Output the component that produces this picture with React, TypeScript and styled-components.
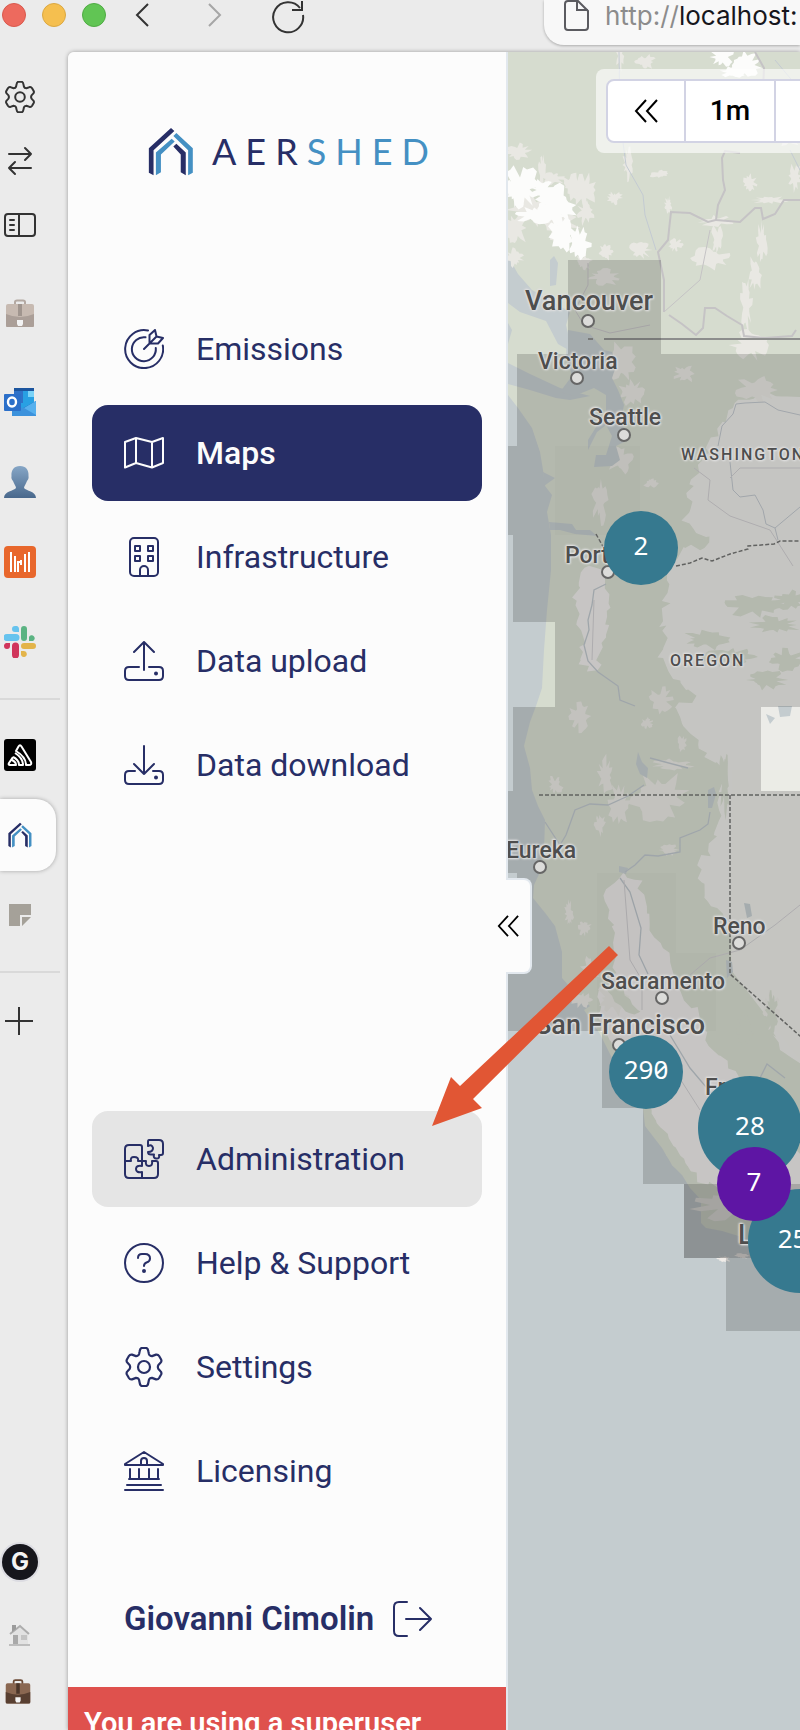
import React from "react";
import styled, { createGlobalStyle } from "styled-components";

const navy = "#272e66";
const sky = "#4490c3";

const Global = createGlobalStyle`
  * { box-sizing: border-box; }
  body { margin: 0; background: #ebebeb; font-family: Roboto, "Liberation Sans", sans-serif; }
  button { font: inherit; color: inherit; background: none; border: 0; padding: 0; cursor: pointer; }
  a { color: inherit; text-decoration: none; }
  svg { display: block; flex: none; }
`;

const Browser = styled.div`
  display: flex;
  flex-direction: column;
  height: 100vh;
  overflow: hidden;
`;

const TopBar = styled.header`
  display: flex;
  align-items: flex-start;
  flex: none;
  height: 52px;
  padding-left: 2px;
`;

const TopTools = styled.div`
  display: flex;
  align-items: center;
  height: 30px;
`;

const Lights = styled.div`
  display: flex;
  gap: 16px;
  margin-right: 20px;
`;

const Light = styled.button<{ $fill: string; $edge: string }>`
  width: 24px;
  height: 24px;
  border-radius: 50%;
  background: ${(p) => p.$fill};
  border: 1px solid ${(p) => p.$edge};
`;

const ToolButton = styled.button<{ $after?: number }>`
  display: grid;
  place-items: center;
  width: 32px;
  height: 30px;
  margin-right: ${(p) => p.$after ?? 0}px;
`;

const UrlBar = styled.label`
  display: flex;
  flex: 1;
  align-items: flex-start;
  height: 45px;
  min-width: 0;
  margin-left: 241px;
  padding-left: 20px;
  background: #f8f8f8;
  border-radius: 0 0 0 20px;
  box-shadow: 0 1px 3px rgba(0, 0, 0, 0.28);
  font: 26px/32px Inter, sans-serif;
  color: #8c8c8c;
  overflow: hidden;
  svg { margin-right: 16px; }
`;

const UrlInput = styled.input`
  flex: 1;
  min-width: 0;
  height: 32px;
  padding: 0;
  border: 0;
  background: none;
  outline: none;
  font: inherit;
  color: #16161c;
`;

const Body = styled.div`
  display: flex;
  flex: 1;
  min-height: 0;
`;

const Rail = styled.nav`
  display: flex;
  flex-direction: column;
  flex: none;
  width: 68px;
  padding: 13px 0 10px;
  color: #333;
`;

const RailButton = styled.button<{ $h: number; $gap?: number }>`
  display: flex;
  align-items: center;
  flex: none;
  height: ${(p) => p.$h}px;
  margin-bottom: ${(p) => p.$gap ?? 0}px;
  padding-left: 4px;
`;

const ActiveTab = styled.button`
  display: flex;
  align-items: center;
  flex: none;
  width: 56px;
  height: 72px;
  margin: 4px 0;
  padding-left: 8px;
  background: #fcfcfc;
  border-radius: 0 20px 20px 0;
  box-shadow: 0 0 4px rgba(0, 0, 0, 0.3);
`;

const RailLine = styled.hr`
  width: 60px;
  height: 2px;
  flex: none;
  margin: 16px 0 15px;
  border: 0;
  background: #d9d9d9;
`;

const RailSpace = styled.div`
  flex: 1;
`;

const Avatar = styled.span`
  display: grid;
  place-items: center;
  width: 36px;
  height: 36px;
  margin-left: -2px;
  border-radius: 50%;
  background: #16161c;
  box-shadow: 0 0 0 2px #dcdce2;
  color: #f4f4f4;
  font: 700 24px/36px Inter, sans-serif;
`;

const Frame = styled.main`
  display: flex;
  flex: 1;
  min-width: 0;
  border-top-left-radius: 6px;
  box-shadow: 0 0 4px rgba(0, 0, 0, 0.35);
  overflow: hidden;
`;

const Sidebar = styled.aside`
  position: relative;
  z-index: 2;
  display: flex;
  flex-direction: column;
  flex: none;
  width: 440px;
  background: #fcfcfc;
  border-right: 2px solid #e2e8ee;
  color: ${navy};
  > * { flex-shrink: 0; }
`;

const Brand = styled.a`
  display: flex;
  align-items: center;
  height: 50px;
  margin: 74px 0 125px 80px;
  gap: 18px;
  font: 36px/50px Lato, sans-serif;
  letter-spacing: 9px;
  span span { color: ${sky}; }
`;

const NavList = styled.nav<{ $after: number }>`
  display: flex;
  flex-direction: column;
  gap: 8px;
  margin: 0 24px ${(p) => p.$after}px;
`;

const NavItem = styled.a<{ $tone?: "active" | "hover" }>`
  display: flex;
  align-items: center;
  gap: 32px;
  height: 96px;
  padding: 0 32px;
  border-radius: 16px;
  font-size: 32px;
  line-height: 40px;
  font-weight: ${(p) => (p.$tone === "active" ? 500 : 400)};
  color: ${(p) => (p.$tone === "active" ? "#fcfcfc" : navy)};
  background: ${(p) => (p.$tone === "active" ? navy : p.$tone === "hover" ? "#e5e5e5" : "none")};
`;

const UserRow = styled.div`
  display: flex;
  align-items: center;
  gap: 18px;
  height: 96px;
  margin: 0 24px 20px;
  padding: 0 32px;
  font-size: 33px;
  line-height: 40px;
  font-weight: 600;
`;

const Banner = styled.p`
  flex: 1;
  margin: 0;
  padding: 20px 16px;
  background: #df514d;
  color: #fff;
  font-size: 29px;
  line-height: 32px;
  font-weight: 600;
`;

const Collapse = styled.button`
  position: absolute;
  top: 826px;
  right: -26px;
  display: flex;
  align-items: center;
  width: 26px;
  height: 96px;
  background: #fcfcfc;
  border: 2px solid #e2e8ee;
  border-left: 0;
  border-radius: 0 8px 8px 0;
  color: #000;
  svg { margin-left: -9px; }
`;

const MapArea = styled.section`
  position: relative;
  flex: 1;
  min-width: 0;
  overflow: hidden;
  background: #c4cccf;
`;

const Terrain = styled.svg`
  position: absolute;
  inset: 0;
  width: 100%;
  height: 100%;
`;

const TimeBox = styled.div`
  position: absolute;
  top: 17px;
  left: 88px;
  padding: 10px;
  border-radius: 8px;
  background: rgba(255, 255, 255, 0.6);
`;

const TimeGroup = styled.div`
  display: flex;
  height: 64px;
  background: #fff;
  border: 2px solid #d2d3e4;
  border-radius: 8px;
`;

const TimeButton = styled.button<{ $w: number }>`
  display: grid;
  place-items: center;
  width: ${(p) => p.$w}px;
  border-right: 2px solid #d2d3e4;
  font-size: 28px;
  line-height: 32px;
  font-weight: 500;
  color: #000;
`;

const Place = styled.span<{ $x: number; $y: number; $kind: "city" | "metro" | "state" }>`
  position: absolute;
  left: ${(p) => p.$x - 508}px;
  top: ${(p) => p.$y - 67}px;
  white-space: nowrap;
  line-height: 32px;
  font-weight: 500;
  font-size: ${(p) => ({ city: 23, metro: 27, state: 16 })[p.$kind]}px;
  letter-spacing: ${(p) => (p.$kind === "state" ? 2 : 0)}px;
  color: #4e4e4e;
  text-shadow: 0 0 2px #e4e4e4, 0 0 3px #e4e4e4, 1px 1px 2px #dcdcdc, -1px -1px 2px #dcdcdc;
`;

const Cluster = styled.button<{ $x: number; $y: number; $r: number; $violet?: boolean; $lead?: boolean }>`
  position: absolute;
  left: ${(p) => p.$x - 508 - p.$r}px;
  top: ${(p) => p.$y - 52 - p.$r}px;
  display: grid;
  place-items: center;
  width: ${(p) => p.$r * 2}px;
  height: ${(p) => p.$r * 2}px;
  padding-bottom: 6px;
  border-radius: 50%;
  background: ${(p) => (p.$violet ? "#5e15a4" : "#36798f")};
  color: #fff;
  font: 26px/32px "Noto Sans", sans-serif;
  font-feature-settings: "zero";
  span { width: 3ch; text-align: ${(p) => (p.$lead ? "left" : "center")}; }
`;

const Pointer = styled.svg`
  position: absolute;
  top: 893px;
  left: 364px;
  z-index: 3;
  pointer-events: none;
`;

const Line = ({ children, w = 2, s = 40, vb }: { children: React.ReactNode; w?: number; s?: number; vb?: string }) => (
  <svg width={s} height={s} viewBox={vb ?? `0 0 ${s} ${s}`} fill="none" stroke="currentColor" strokeWidth={w} strokeLinecap="round" strokeLinejoin="round">
    {children}
  </svg>
);

const House = ({ w, h }: { w: number; h: number }) => (
  <svg width={w} height={h} viewBox="446 378 136 146">
    <path fill={navy} d="M448 441L514 381L524 390L462 447V522L448 514Z" />
    <path fill={sky} d="M469 454L516 413L525 421L484 460V513L469 522Z" />
    <path fill={sky} d="M521 405L530 396L579 441V514L565 522V447Z" />
    <path fill={navy} d="M521 436L530 428L558 454V522L543 513V460Z" />
  </svg>
);

const Gear = ({ s = 40, w = 2.2 }: { s?: number; w?: number }) => (
  <Line s={s} w={w} vb="0 0 40 40">
    <path d="M15.600 4.500Q16.200 1 18 1H22Q23.800 1 24.400 4.500L24.900 7Q25.500 9 28 9.100L32 7.600Q34 7.200 35.100 9L37.100 12.500Q38 14.300 36.500 15.800L34.400 18Q33.300 20 34.400 22L36.500 24.200Q38 25.700 37.100 27.500L35.100 31Q34 32.800 32 32.400L28 30.900Q25.500 31 24.900 33L24.400 35.500Q23.800 39 22 39H18Q16.200 39 15.600 35.500L15.100 33Q14.500 31 12 30.900L8 32.400Q6 32.800 4.900 31L2.900 27.500Q2 25.700 3.500 24.200L5.600 22Q6.700 20 5.600 18L3.500 15.800Q2 14.300 2.900 12.500L4.900 9Q6 7.200 8 7.600L12 9.100Q14.500 9 15.100 7Z" />
    <circle cx="20" cy="20" r="6" />
  </Line>
);

const Double = ({ s }: { s: number }) => (
  <svg width={s} height={s} viewBox="0 0 24 24" fill="none" stroke="currentColor" strokeWidth="2">
    <path d="M12 1L2 12L12 23M23 1L13 12L23 23" />
  </svg>
);

const Briefcase = ({ s, dark }: { s: number; dark?: boolean }) => (
  <svg width={s} height={s} viewBox="0 0 32 30">
    <path d="M11 6V3Q11 1.500 13 1.500H19Q21 1.500 21 3V6" fill="none" stroke={dark ? "#6b4a36" : "#b4a9a2"} strokeWidth="2" />
    <rect x="2" y="5" width="28" height="23" rx="2" fill={dark ? "#8a6751" : "#c7bab1"} />
    <path d="M2 15Q16 21 30 15V27Q30 28 29 28H3Q2 28 2 27Z" fill={dark ? "#583f31" : "#ab9f98"} />
    <rect x="14" y="5" width="4" height="12" fill={dark ? "#4a3529" : "#a0958e"} />
    <path d="M13 21H19V25L18 27H14L13 25Z" fill="#f3f3f3" />
  </svg>
);

const icons: Record<string, React.ReactNode> = {
  emissions: (
    <Line>
      <path d="M24 1.500A19 19 0 1 0 38.800 16.500" />
      <path d="M21.500 8.300A12 12 0 1 0 31.800 19" />
      <path d="M20 20L29 11M25.500 14V6L31 1L32.500 7.500L39 9L34 14.500H25.500M25.500 14.500L32.500 7.500" />
    </Line>
  ),
  maps: (
    <Line>
      <path d="M1 9L12 5L28 9L39 5V30L28 34.500L12 30L1 34.500ZM12 5V30M28 9V34.500" />
    </Line>
  ),
  infra: (
    <Line>
      <rect x="6" y="1" width="28" height="38" rx="4" />
      <path d="M11 9H16V14H11ZM24 9H29V14H24ZM11 19H16V24H11ZM24 19H29V24H24ZM16 39V33A4 4 0 0 1 24 33V39" />
    </Line>
  ),
  upload: (
    <Line>
      <path d="M20 29V1M10 11L20 1L30 11M15 26H5Q1 26 1 30V35Q1 39 5 39H35Q39 39 39 35V30Q39 26 35 26H25" />
      <circle cx="32" cy="32.500" r="1" fill="currentColor" />
    </Line>
  ),
  download: (
    <Line>
      <path d="M20 1V29M10 19L20 29L30 19M11 26H5Q1 26 1 30V35Q1 39 5 39H35Q39 39 39 35V30Q39 26 35 26H29" />
      <circle cx="32" cy="32.500" r="1" fill="currentColor" />
    </Line>
  ),
  admin: (
    <Line>
      <path d="M18 22V8Q18 6 16 6H5Q1 6 1 10V35Q1 39 5 39H30Q34 39 34 35V24Q34 22 32 22H28Q29 27 25 27Q21 27 22 22H14Q15 18 10 18Q6 18 7 22H1M18 22V27Q12 26 12 30Q12 34 18 33V39" />
      <path d="M25 1H35Q39 1 39 5V14Q39 16 37 16H35Q36 20 32 19.500Q29 19 30 15.500H27Q24 15.500 24 13Q29 13 29 9Q28 5 24 7V3Q24 1 25 1Z" />
    </Line>
  ),
  help: (
    <Line>
      <circle cx="20" cy="20" r="19" />
      <path d="M14 15Q14 11 18 11H21Q26 11 26 15.500Q26 18.500 22.500 19.500Q20 20.500 20 23" />
      <circle cx="20" cy="28" r="1" fill="currentColor" />
    </Line>
  ),
  settings: <Gear />,
  licensing: (
    <Line>
      <path d="M1 13L20 1L39 13V14H1ZM17 14V10A3 3 0 0 1 23 10V14M5 28H35M3 34H37M1 39H39M6 18V28M15 18V28M25 18V28M34 18V28" />
    </Line>
  ),
};

const mainNav: [string, string, ("active" | "hover")?][] = [
  ["emissions", "Emissions"],
  ["maps", "Maps", "active"],
  ["infra", "Infrastructure"],
  ["upload", "Data upload"],
  ["download", "Data download"],
];
const lowerNav: [string, string, ("active" | "hover")?][] = [
  ["admin", "Administration", "hover"],
  ["help", "Help & Support"],
  ["settings", "Settings"],
  ["licensing", "Licensing"],
];

const noise = (seed: number) => {
  let v = seed * 7919 + 17;
  return () => {
    v = (v * 16807) % 2147483647;
    return v / 2147483647;
  };
};

/* Irregular patch of ground cover round a centre point. */
const patch = (cx: number, cy: number, rx: number, ry: number, seed: number) => {
  const next = noise(seed);
  const n = 26;
  let d = "";
  for (let i = 0; i < n; i++) {
    const a = (i / n) * Math.PI * 2;
    const k = 0.4 + next() * 0.7;
    d += `${i ? "L" : "M"}${(cx + Math.cos(a) * rx * k).toFixed(1)} ${(cy + Math.sin(a) * ry * k).toFixed(1)}`;
  }
  return d + "Z";
};

/* Jagged outline that follows a list of corner points. */
const rough = (pts: number[], seed: number, amp = 4) => {
  const next = noise(seed);
  let d = "";
  for (let i = 0; i < pts.length; i += 2) {
    const x0 = pts[i], y0 = pts[i + 1];
    const j = (i + 2) % pts.length;
    const x1 = pts[j], y1 = pts[j + 1];
    const steps = Math.max(1, Math.round(Math.hypot(x1 - x0, y1 - y0) / 6));
    for (let s = 0; s < steps; s++) {
      const t = s / steps;
      const o = x0 > 805 || x1 > 805 ? 0 : amp;
      d += `${d ? "L" : "M"}${(x0 + (x1 - x0) * t + (next() - 0.5) * 2 * o).toFixed(1)} ${(y0 + (y1 - y0) * t + (next() - 0.5) * 2 * o).toFixed(1)}`;
    }
  }
  return d + "Z";
};

const coast =
  "M500 40H2400V1300L800 1256L745 1238L722 1231L706 1228L701 1223V1200L690 1188L682 1175L672 1165L662 1148L645 1126L643 1108L628 1090L600 1034L584 1010L590 1006L576 994L562 978L562 952L555 926L546 914L533 898L534 885L540 872L544 850L545 820L538 806L532 790L530 768L524 746L530 722L536 706L542 688L544 650L547 610L551 570L551 535L547 512L552 495L545 486L543 470L540 452L532 428L518 408L508 395V384L530 390L556 398L570 400L590 396L560 388L530 374L508 363V303L520 312L546 321L558 344L572 352L566 325L570 312L550 300L532 290L518 274L508 256Z";

const snow: [number, number, number, number][] = [
  [521, 187, 18, 22], [516, 192, 12, 16], [557, 205, 20, 22], [550, 212, 20, 12], [536, 214, 22, 10], [562, 232, 12, 22], [579, 243, 11, 16], [542, 190, 12, 12],
  [722, 57, 12, 12], [746, 65, 16, 14], [732, 72, 12, 7],
];
const pale: [number, number, number, number][] = [
  [518, 152, 14, 9], [553, 178, 14, 8], [584, 190, 14, 18], [516, 228, 12, 20], [542, 170, 4, 22], [606, 252, 8, 9], [614, 198, 9, 7], [620, 56, 4, 18],
  [530, 210, 24, 20], [560, 222, 20, 24], [586, 212, 10, 14], [572, 186, 12, 14], [514, 258, 10, 10],
  [628, 165, 6, 18], [660, 174, 12, 4], [716, 221, 18, 6], [717, 240, 6, 16], [712, 258, 22, 12], [762, 243, 6, 22], [755, 275, 8, 22], [746, 305, 7, 28],
  [750, 345, 20, 16], [756, 390, 22, 14], [640, 250, 12, 10], [675, 245, 8, 7], [795, 178, 9, 14], [750, 182, 7, 9], [605, 277, 18, 9], [584, 262, 9, 8],
  [668, 205, 4, 10], [788, 140, 18, 6], [645, 62, 12, 8], [620, 362, 16, 22], [632, 392, 16, 14], [685, 374, 12, 10], [770, 200, 20, 4],
  [620, 460, 14, 14], [600, 500, 9, 26], [651, 483, 8, 5], [580, 716, 11, 16], [661, 700, 12, 14], [647, 723, 7, 6], [605, 775, 10, 20], [555, 785, 8, 10],
  [660, 797, 30, 28], [620, 805, 14, 24], [672, 765, 22, 6], [682, 744, 6, 9], [600, 825, 6, 12], [569, 914, 5, 14], [584, 928, 8, 8], [590, 970, 10, 14],
  [612, 1000, 18, 16], [582, 1000, 12, 8], [668, 850, 12, 6], [770, 1010, 10, 20], [730, 1205, 40, 16],
];
const woods: [number, number, number, number][] = [
  [755, 605, 40, 12], [775, 625, 26, 10], [705, 640, 26, 10], [730, 657, 30, 10], [765, 680, 24, 10], [785, 660, 22, 12], [790, 600, 18, 10], [772, 1010, 7, 26], [745, 1030, 10, 18], [725, 780, 6, 40],
];

const eastSide = [
  900, 400, 770, 396, 735, 400, 724, 425, 708, 446, 700, 466, 690, 486, 690, 505, 684, 520, 700, 530, 712, 541, 700, 548, 680, 549, 676, 562, 668, 578, 664, 598, 668, 606, 662, 618, 665, 640, 660, 656, 668, 672, 682, 686, 695, 696, 688, 702, 674, 706, 680, 722, 696, 742, 708, 760, 726, 772, 720, 800, 718, 830, 710, 850, 700, 862, 702, 900, 720, 905, 738, 955, 762, 1000, 780, 1050, 900, 1130,
];
const centralValley = [
  606, 890, 625, 872, 640, 880, 645, 910, 655, 935, 672, 960, 680, 990, 694, 1010, 712, 1050, 736, 1075, 765, 1110, 800, 1160, 900, 1200, 760, 1200, 700, 1180, 664, 1136, 648, 1108, 622, 1070, 606, 1034, 596, 1000, 614, 970, 612, 930,
];
const willamette = [586, 568, 606, 572, 608, 600, 605, 640, 596, 668, 580, 668, 582, 640, 574, 602];

const dots = [588, 321, 577, 378, 624, 435, 608, 572, 540, 867, 739, 943, 662, 998, 619, 1045];

const Ground = () => (
  <Terrain aria-hidden="true">
    <g transform="translate(-508 -52)">
      <path d={coast} fill="#d6dccf" />
      <g fill="#e9e8e3">
        <path d={rough(eastSide, 3)} fill="#ececE8" />
        <path d="M732 770H2400V1120L800 1060L731 970Z" fill="#ebece6" />
        <path d={rough(centralValley, 8)} fill="#eeecea" />
        <path d={rough(willamette, 5)} fill="#eeecea" />
        {pale.map(([x, y, a, b], i) => <path key={i} d={patch(x, y, a, b, i + 40)} />)}
      </g>
      <g fill="#fcfcfb">{snow.map(([x, y, a, b], i) => <path key={i} d={patch(x, y, a * 1.1, b, i + 9)} />)}</g>
      <g fill="#d6dccf">
        {woods.map(([x, y, a, b], i) => <path key={i} d={patch(x, y, a, b, i + 90)} />)}
        <path d={rough([606, 975, 618, 985, 640, 1012, 630, 1014, 606, 992], 4, 2)} />
        <path d={rough([644, 1110, 664, 1130, 690, 1168, 690, 1184, 670, 1160], 6, 2)} />
      </g>
      <g fill="#c4cccf">
        <path d="M568 330L590 334L604 350L612 352L616 366L612 378L618 390L624 405L621 420L628 440L616 446L620 460L612 466L594 467L596 455L606 455L612 436L606 425L597 432L588 450L588 440L598 424L606 415L606 395L594 388L574 396L560 392L572 376L566 355Z" />
        <path d="M543 472L555 478L544 486ZM549 522L572 524L576 530L590 530L597 536L575 534L560 530H550ZM638 752L642 762L648 768L647 778L640 774L636 764ZM708 790L714 787L716 794L712 808H708ZM744 903L750 904L752 916L747 918ZM726 960L732 962L733 972L727 978ZM619 866L628 868L626 874L619 872ZM766 714L775 718L770 724ZM778 706H792L790 716L780 717Z" />
        <path d="M508 323L512 330L508 344ZM550 260L554 256L558 263L556 285L550 286Z" />
      </g>
      <g fill="none" stroke="#c5c3c5" strokeWidth="2">
        <path d="M755 52L764 68L763 90M740 153L725 151L722 158L723 180L725 190L718 205L716 220L708 222L690 213L671 212L669 230L668 240L658 252L664 280L664 312M669 315L682 324L696 335L703 328L705 308L715 308L727 316L742 325L744 336L765 338L792 336L796 330M716 220L740 222L755 208L761 208L763 219L775 214L784 200L800 200" />
        <path d="M588 263L588 285L575 310L584 325L610 333L650 325M664 312L700 280L710 230" strokeWidth="1" />
      </g>
      <g fill="none" stroke="#c3cad2" strokeWidth="1">
        <path d="M619 52L620 120L626 165L643 195L645 215L656 250M775 60L800 90M790 150L800 170" />
        <path d="M736 404L745 403L765 402L778 410L800 415M736 404L733 414L722 426L718 446M730 462L733 490L740 497L755 495L763 510L766 524L775 528L778 540M775 528L800 507" stroke="#bfc5cb" />
        <path d="M606 584L594 590L592 605L588 620L589 630L584 645L588 661L598 672L618 686L620 700L635 706M545 822L560 845L566 835L575 810L590 804L608 805L628 796L644 785M650 758L665 762L688 768M710 812L708 824L700 830L680 838L680 852L658 856L645 855L635 865L625 872M620 878L630 892L641 928L639 955L648 974M670 1035L690 1068L712 1094M760 1078L767 1064L785 1078" stroke="#bcc4ca" strokeWidth="1.300" />
        <path d="M594 600L592 660M624 880L630 960L642 980V1010M668 1060L700 1110M694 468L710 480L708 500L730 516L770 530L793 566M730 478L740 468H800M690 975L710 958L740 950L775 925L800 905" stroke="#cfcdd0" />
      </g>
      <path d="M588 339H593M604 339H2400" stroke="#8d8e8d" strokeWidth="2" />
      <g fill="none" stroke="#6f706e" strokeDasharray="4 2">
        <path d="M539 795H2400M730 795V974L800 1036L900 1110M596 534L606 552M676 566L690 563L702 558L712 561L730 554L748 549V546L774 544L780 541H2400" strokeWidth="1.500" />
      </g>
      <path d={patch(724, 1259, 7, 4, 3) + patch(742, 1256, 9, 3, 5)} fill="#f0ece8" />
      <path
        fillRule="evenodd"
        fill="rgba(44,44,44,.2)"
        d="M568 260H661V354H2400V1184H643V1108H602V1031H508V958H517V873H508V791H513V707H555V622H513V535H508V446H517V354H568ZM761 707V791H842V707Z"
      />
      <path fill="rgba(44,44,44,.2)" d="M684 1184H2400V1258H684ZM726 1258H2400V1331H726Z" />
      <path fill="rgba(44,44,44,.2)" d="M684 1184H800V1258H684Z" />
      <path fill="rgba(44,44,44,.02)" d="M597 873H676V953H716V1031H597ZM555 446H640V535H555Z" />
      <g fill="#dcdcda" stroke="#666" strokeWidth="2">
        {dots.map((x, i) => (i % 2 ? null : <circle key={i} cx={x} cy={dots[i + 1]} r="6" />))}
      </g>
    </g>
  </Terrain>
);

const places: [string, number, number, "city" | "metro" | "state"][] = [
  ["Vancouver", 525, 300, "metro"], ["Victoria", 538, 361, "city"], ["Seattle", 589, 417, "city"], ["Portland", 565, 555, "city"],
  ["Eureka", 506, 850, "city"], ["Reno", 713, 926, "city"], ["Sacramento", 601, 981, "city"], ["San Francisco", 535, 1024, "metro"],
  ["Fresno", 705, 1087, "city"], ["Los Angeles", 738, 1234, "metro"], ["WASHINGTON", 681, 454, "state"], ["OREGON", 670, 660, "state"],
];

export default function App() {
  const items = (list: typeof mainNav) =>
    list.map(([icon, label, tone]) => (
      <NavItem key={icon} href={`#${icon}`} $tone={tone}>
        {icons[icon]}
        {label}
      </NavItem>
    ));

  return (
    <Browser>
      <Global />
      <TopBar>
        <TopTools>
          <Lights>
            <Light aria-label="Close" $fill="#ed6a5e" $edge="#d9594d" />
            <Light aria-label="Minimise" $fill="#f5bf4f" $edge="#dba842" />
            <Light aria-label="Zoom" $fill="#61c554" $edge="#4fab43" />
          </Lights>
          <ToolButton aria-label="Back" $after={41}>
            <svg width="24" height="24" viewBox="0 0 24 24" fill="none" stroke="#333" strokeWidth="2"><path d="M18 1L7 12L18 23" /></svg>
          </ToolButton>
          <ToolButton aria-label="Forward" $after={40}>
            <svg width="24" height="24" viewBox="0 0 24 24" fill="none" stroke="#a6a6a6" strokeWidth="2"><path d="M6 1L17 12L6 23" /></svg>
          </ToolButton>
          <ToolButton aria-label="Reload">
            <svg width="34" height="34" viewBox="0 0 34 34" fill="none" stroke="#333" strokeWidth="2"><path d="M32 15A15 15 0 1 1 29 8M31 1V10H21" /></svg>
          </ToolButton>
        </TopTools>
        <UrlBar>
          <svg width="25" height="32" viewBox="0 0 25 32" fill="none" stroke="#5b5b60" strokeWidth="2"><path d="M4 1H14L24 11V27Q24 30 21 30H4Q1 30 1 27V4Q1 1 4 1ZM13 1V10H24" /></svg>
          <span>http://</span>
          <UrlInput aria-label="Address" defaultValue="localhost:" />
        </UrlBar>
      </TopBar>
      <Body>
        <Rail>
          <RailButton aria-label="Preferences" $h={64}><Gear s={32} w={2.5} /></RailButton>
          <RailButton aria-label="Switch" $h={64}>
            <Line s={32}><path d="M5 9H27M21 3L27 9L21 15M27 23H5M11 17L5 23L11 29" /></Line>
          </RailButton>
          <RailButton aria-label="Panels" $h={64} $gap={17}>
            <Line s={32}><rect x="1" y="5" width="30" height="22" rx="3" /><path d="M15 5V27M6 11H10M6 16H10M6 21H10" /></Line>
          </RailButton>
          <RailButton aria-label="Work" $h={80} $gap={8}><Briefcase s={32} /></RailButton>
          <RailButton aria-label="Outlook" $h={80}>
            <svg width="32" height="28" viewBox="0 0 32 28">
              <path fill="#28a0e3" d="M10 0H30V20H10Z" /><path fill="#1c559e" d="M10 0H30V3H10Z" /><path fill="#2f72c8" d="M10 3H19V15H10Z" /><path fill="#7ad3f8" d="M24 3H30V9H24Z" />
              <path fill="#1e5ca8" d="M32 13V20L16 22Z" /><path fill="#3c92dc" d="M8 18L20 20L32 13V28H8Z" /><path fill="#56b0ee" d="M20 20L32 27V13Z" />
              <rect y="6" width="17" height="17" rx="1" fill="#2b6fc9" /><ellipse cx="8" cy="14" rx="4" ry="4.500" fill="none" stroke="#fff" strokeWidth="2.400" />
            </svg>
          </RailButton>
          <RailButton aria-label="Contacts" $h={80}>
            <svg width="32" height="32" viewBox="0 0 32 32">
              <defs><linearGradient id="person" x2="0" y2="1"><stop stopColor="#86a6c6" /><stop offset="1" stopColor="#49688c" /></linearGradient></defs>
              <path fill="url(#person)" d="M16 0C22 0 25 4 24.500 10C25 12 24 14 23 15C22 18 20 20 20 22C22 25 32 25 32 32H0C0 25 10 25 12 22C12 20 10 18 9 15C8 14 7 12 7.500 10C7 4 10 0 16 0Z" />
            </svg>
          </RailButton>
          <RailButton aria-label="Metrics" $h={80}>
            <svg width="32" height="32" viewBox="0 0 32 32"><rect width="32" height="32" rx="4" fill="#e8672c" /><path stroke="#fff" strokeWidth="2" d="M7 6V26M11 10V26M14 17V26M17 14V19M21 8V26M25 6V26M13 16H18" /></svg>
          </RailButton>
          <RailButton aria-label="Slack" $h={80}>
            <svg width="32" height="32" viewBox="0 0 32 32">
              <path fill="#66c3ee" d="M3 8H12A3 3 0 0 1 12 15H3A3 3 0 0 1 3 8ZM11 0A3 3 0 0 1 15 3V6H11A3 3 0 0 1 11 0Z" />
              <path fill="#5bb382" d="M17 3A3 3 0 0 1 23 3V12A3 3 0 0 1 17 12ZM25 15V11A3 3 0 1 1 29 15Z" />
              <path fill="#e3b44a" d="M20 17H29A3 3 0 0 1 29 23H20A3 3 0 0 1 20 17ZM17 25H20A3 3 0 1 1 17 29Z" />
              <path fill="#d0355b" d="M8 20A3 3 0 0 1 15 20V29A3 3 0 0 1 8 29ZM0 20A3 3 0 0 1 2 17H6V20A3 3 0 0 1 0 20Z" />
            </svg>
          </RailButton>
          <RailLine />
          <RailButton aria-label="Sentry" $h={80}>
            <svg width="32" height="32" viewBox="0 0 32 32"><rect width="32" height="32" rx="3" fill="#000" /><path fill="none" stroke="#fff" strokeWidth="2" strokeLinejoin="round" d="M12 12L14.500 7.500Q16 5 17.500 7.500L27 23Q28 26 25 26H22Q22 18 12 12ZM11 14Q19 19 19 26H15Q15 21 9 18M9 18L5 24Q4 26 6 26H12Q12 23 8 21" /></svg>
          </RailButton>
          <ActiveTab aria-label="Aershed"><House w={24} h={26} /></ActiveTab>
          <RailButton aria-label="Note" $h={80}>
            <svg width="32" height="32" viewBox="0 0 32 32" fill="#a5a199"><path d="M5 5H27V16H16V27H5ZM18 18H27L18 27Z" /></svg>
          </RailButton>
          <RailLine />
          <RailButton aria-label="New tab" $h={66}>
            <svg width="30" height="30" viewBox="0 0 30 30" stroke="#333" strokeWidth="2"><path d="M15 1V29M1 15H29" /></svg>
          </RailButton>
          <RailSpace />
          <RailButton aria-label="Profile" $h={80} $gap={6}><Avatar>G</Avatar></RailButton>
          <RailButton aria-label="Home" $h={56}>
            <svg width="32" height="24" viewBox="0 0 32 24">
              <path d="M9 9L16 3L24 9V22H9Z" fill="#e2e2e2" /><path d="M6 10L16 2L25 10" fill="none" stroke="#adadad" strokeWidth="2" /><path d="M8 1H12V5L8 8Z" fill="#9b9b9b" />
              <path d="M9 11H14V22H9Z" fill="#a9a9a9" /><path d="M17 11H23V16H17Z" fill="#c4c4c4" /><path d="M5 21H26" stroke="#bdbdbd" strokeWidth="2" />
            </svg>
          </RailButton>
          <RailButton aria-label="Office" $h={56}><Briefcase s={28} dark /></RailButton>
        </Rail>
        <Frame>
          <Sidebar>
            <Brand href="#home" aria-label="Aershed">
              <House w={46} h={49} />
              <span>AER<span>SHED</span></span>
            </Brand>
            <NavList $after={298}>{items(mainNav)}</NavList>
            <NavList $after={52}>{items(lowerNav)}</NavList>
            <UserRow>
              Giovanni Cimolin
              <button aria-label="Log out">
                <Line><path d="M15 3H7Q2 3 2 8V32Q2 37 7 37H15M14 20H39M28 9L39 20L28 31" /></Line>
              </button>
            </UserRow>
            <Banner>You are using a superuser</Banner>
            <Collapse aria-label="Collapse sidebar"><Double s={22} /></Collapse>
            <Pointer width="188" height="182" viewBox="432 945 188 182" aria-hidden="true">
              <path fill="#e15634" d="M609 946L618 955L473 1099L482 1108L432 1126L451 1077L460 1086Z" />
            </Pointer>
          </Sidebar>
          <MapArea>
            <Ground />
            {places.map(([name, x, y, kind]) => (
              <Place key={name} $x={x} $y={y} $kind={kind}>{name}</Place>
            ))}
            <Cluster $x={641} $y={548} $r={37}><span>2</span></Cluster>
            <Cluster $x={646} $y={1072} $r={37}><span>290</span></Cluster>
            <Cluster $x={750} $y={1128} $r={52}><span>28</span></Cluster>
            <Cluster $x={800} $y={1241} $r={52} $lead><span>25</span></Cluster>
            <Cluster $x={754} $y={1184} $r={37} $violet><span>7</span></Cluster>
            <TimeBox>
              <TimeGroup>
                <TimeButton $w={78} aria-label="Earlier"><Double s={24} /></TimeButton>
                <TimeButton $w={90}>1m</TimeButton>
                <TimeButton $w={90} aria-label="Next range" />
              </TimeGroup>
            </TimeBox>
          </MapArea>
        </Frame>
      </Body>
    </Browser>
  );
}
